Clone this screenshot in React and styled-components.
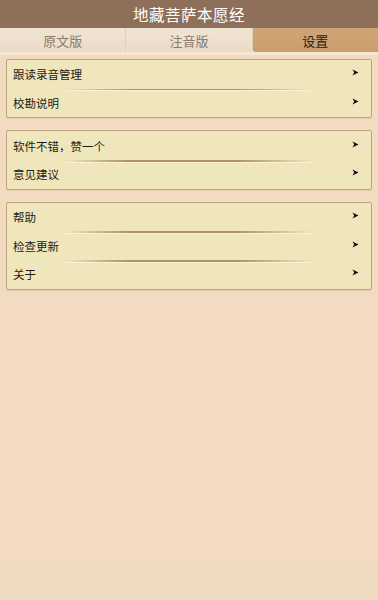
import React from 'react'
import styled, { createGlobalStyle } from 'styled-components'

const GlobalStyle = createGlobalStyle`
  html, body {
    margin: 0;
    padding: 0;
    background: #f2dbc1;
  }
  body {
    font-family: "Noto Sans CJK SC", "Noto Sans", sans-serif;
  }
`

const Page = styled.div`
  width: 378px;
  height: 600px;
  display: flex;
  flex-direction: column;
  background: linear-gradient(to bottom, #f2dbc1 0, #f2dbc1 563px, #eedbc0 564px);
`

const TitleBar = styled.header`
  height: 28px;
  background: #8e6f59;
  color: #fff;
  font-size: 15.5px;
  display: flex;
  align-items: center;
  justify-content: center;
  letter-spacing: 0.5px;
`

const Tabs = styled.nav`
  display: flex;
  height: 24px;
  border-bottom: 3px solid #f7e6d3;
  background: #efe2d0;
`

const Tab = styled.div`
  flex: 1;
  display: flex;
  align-items: center;
  justify-content: center;
  font-size: 13px;
  color: ${({ active }) => (active ? '#2a2118' : '#8a7c6c')};
  background: ${({ active }) =>
    active
      ? 'linear-gradient(to bottom, #cfa577, #c99e6e)'
      : 'linear-gradient(to bottom, #efe4d4, #ebdcc8)'};
  border-left: ${({ first }) => (first ? 'none' : '1px solid #e0cfb8')};
  border-bottom-left-radius: ${({ active }) => (active ? '3px' : '0')};
`

const Content = styled.main`
  display: flex;
  flex-direction: column;
  gap: 12px;
  padding: 4px 6px 0 6px;
`

const Card = styled.section`
  background: #f0e6bc;
  border: 1px solid #bca482;
  border-radius: 2px;
  box-shadow: 0 1px 0 rgba(150, 110, 70, 0.12);
`

const Row = styled.div`
  position: relative;
  height: 28.7px;
  display: flex;
  align-items: center;
  justify-content: space-between;
  padding: 0 12px 0 6px;
  font-size: 11.5px;
  color: #1f1a14;

  & + &::before {
    content: '';
    position: absolute;
    top: 0;
    left: 58px;
    right: 58px;
    height: 1.5px;
    background: linear-gradient(
      to right,
      rgba(176, 146, 100, 0),
      rgba(168, 138, 94, 0.9) 25%,
      rgba(168, 138, 94, 0.9) 70%,
      rgba(176, 146, 100, 0)
    );
    box-shadow: 0 1px 0 rgba(255, 250, 230, 0.6);
  }
`

const Arrow = styled.svg`
  width: 7px;
  height: 7px;
  margin-top: -3px;
`

const ArrowIcon = () => (
  <Arrow viewBox="0 0 8 8">
    <path d="M0.5 0.5 L7.5 4 L0.5 7.5 L2.5 4 Z" fill="#111" />
  </Arrow>
)

const groups = [
  ['跟读录音管理', '校勘说明'],
  ['软件不错，赞一个', '意见建议'],
  ['帮助', '检查更新', '关于'],
]

export default function App() {
  return (
    <Page>
      <GlobalStyle />
      <TitleBar>地藏菩萨本愿经</TitleBar>
      <Tabs>
        <Tab first>原文版</Tab>
        <Tab>注音版</Tab>
        <Tab active>设置</Tab>
      </Tabs>
      <Content>
        {groups.map((items, i) => (
          <Card key={i}>
            {items.map((label) => (
              <Row key={label}>
                <span>{label}</span>
                <ArrowIcon />
              </Row>
            ))}
          </Card>
        ))}
      </Content>
    </Page>
  )
}
